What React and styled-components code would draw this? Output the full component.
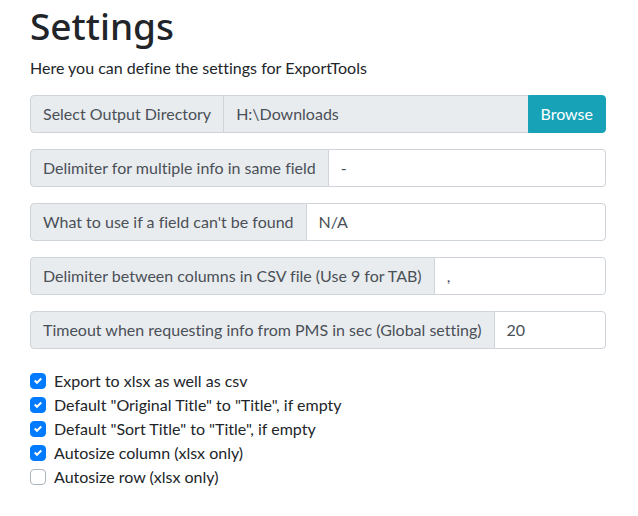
import React from "react";
import styled, { createGlobalStyle } from "styled-components";

const GlobalStyle = createGlobalStyle`
    * { box-sizing: border-box; }
    body {
        margin: 0;
        background: #fff;
        font-family: Lato, "Noto Sans", sans-serif;
        font-size: 16px;
        line-height: 1.5;
        color: #212529;
        font-variant-ligatures: none;
    }
`;

const Page = styled.div`
    padding: 3px 32px 0 30px;
`;

const Title = styled.h1`
    margin: 0 0 8px;
    font-family: "Noto Sans", sans-serif;
    font-size: 37px;
    font-weight: 500;
    line-height: 45px;
`;

const Intro = styled.p`
    margin: 0 0 15px;
`;

const Group = styled.div`
    display: flex;
    align-items: stretch;
    height: 38px;
    margin-bottom: 16px;
`;

const Prepend = styled.span`
    display: flex;
    align-items: center;
    padding: 6px 12px;
    background: #e9ecef;
    border: 1px solid #ced4da;
    border-radius: 4px 0 0 4px;
    color: #495057;
    white-space: nowrap;
`;

const Field = styled.input`
    flex: 1;
    min-width: 0;
    padding: 6px 12px;
    margin-left: -1px;
    font: inherit;
    color: #495057;
    background: ${props => (props.readOnly ? "#e9ecef" : "#fff")};
    border: 1px solid #ced4da;
    border-radius: ${props => (props.$joined ? "0" : "0 4px 4px 0")};
    outline: none;
`;

const Button = styled.button`
    padding: 6px 12px;
    margin-left: -1px;
    font: inherit;
    color: #fff;
    background: #17a2b8;
    border: 1px solid #17a2b8;
    border-radius: 0 4px 4px 0;
`;

const Checks = styled.div`
    margin-top: 20px;
`;

const CheckRow = styled.label`
    display: flex;
    align-items: center;
    height: 24px;
    color: #212529;
`;

const Box = styled.span`
    width: 16px;
    height: 16px;
    margin-right: 8px;
    border-radius: 4px;
    display: flex;
    align-items: center;
    justify-content: center;
    background: ${props => (props.$on ? "#007bff" : "#fff")};
    border: 1px solid ${props => (props.$on ? "#007bff" : "#adb5bd")};
`;

const fields = [
    { label: "Delimiter for multiple info in same field", value: "-" },
    { label: "What to use if a field can't be found", value: "N/A" },
    { label: "Delimiter between columns in CSV file (Use 9 for TAB)", value: "," },
    { label: "Timeout when requesting info from PMS in sec (Global setting)", value: "20" }
];

const checks = [
    { label: "Export to xlsx as well as csv", on: true },
    { label: 'Default "Original Title" to "Title", if empty', on: true },
    { label: 'Default "Sort Title" to "Title", if empty', on: true },
    { label: "Autosize column (xlsx only)", on: true },
    { label: "Autosize row (xlsx only)", on: false }
];

function Check({ on }) {
    return (
        <Box $on={on}>
            {on && (
                <svg width="8" height="8" viewBox="0 0 8 8">
                    <path
                        fill="#fff"
                        d="M6.564.75l-3.59 3.612-1.538-1.55L0 4.26l2.974 2.99L8 2.193z"
                    />
                </svg>
            )}
        </Box>
    );
}

export default function App() {
    return (
        <Page>
            <GlobalStyle />
            <Title>Settings</Title>
            <Intro>Here you can define the settings for ExportTools</Intro>
            <Group>
                <Prepend>Select Output Directory</Prepend>
                <Field readOnly $joined defaultValue="H:\Downloads" />
                <Button type="button">Browse</Button>
            </Group>
            {fields.map(f => (
                <Group key={f.label}>
                    <Prepend>{f.label}</Prepend>
                    <Field defaultValue={f.value} />
                </Group>
            ))}
            <Checks>
                {checks.map(c => (
                    <CheckRow key={c.label}>
                        <Check on={c.on} />
                        {c.label}
                    </CheckRow>
                ))}
            </Checks>
        </Page>
    );
}
